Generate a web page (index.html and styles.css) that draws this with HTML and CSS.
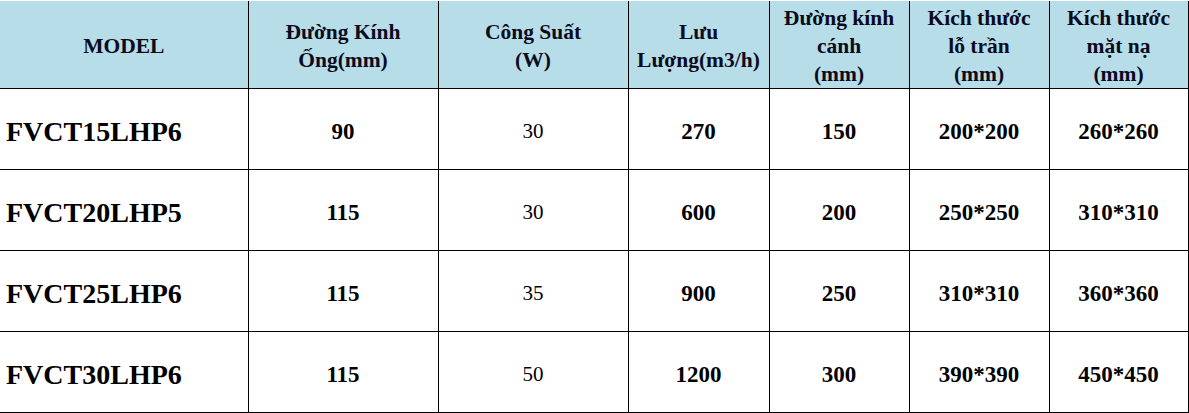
FILE: index.html
```html
<!DOCTYPE html>
<html lang="vi">
<head>
<meta charset="utf-8">
<title>Bảng thông số</title>
<link rel="stylesheet" href="styles.css">
</head>
<body>
<table class="spec">
  <colgroup>
    <col class="c1"><col class="c2"><col class="c3"><col class="c4"><col class="c5"><col class="c6"><col class="c7">
  </colgroup>
  <thead>
    <tr class="head">
      <th>MODEL</th>
      <th>Đường Kính<br>Ống(mm)</th>
      <th>Công Suất<br>(W)</th>
      <th>Lưu<br>Lượng(m3/h)</th>
      <th>Đường kính<br>cánh<br>(mm)</th>
      <th>Kích thước<br>lỗ trần<br>(mm)</th>
      <th>Kích thước<br>mặt nạ<br>(mm)</th>
    </tr>
  </thead>
  <tbody>
    <tr>
      <td class="model">FVCT15LHP6</td><td class="num">90</td><td class="reg">30</td><td class="num">270</td><td class="num">150</td><td class="num">200*200</td><td class="num">260*260</td>
    </tr>
    <tr>
      <td class="model">FVCT20LHP5</td><td class="num">115</td><td class="reg">30</td><td class="num">600</td><td class="num">200</td><td class="num">250*250</td><td class="num">310*310</td>
    </tr>
    <tr>
      <td class="model">FVCT25LHP6</td><td class="num">115</td><td class="reg">35</td><td class="num">900</td><td class="num">250</td><td class="num">310*310</td><td class="num">360*360</td>
    </tr>
    <tr>
      <td class="model">FVCT30LHP6</td><td class="num">115</td><td class="reg">50</td><td class="num">1200</td><td class="num">300</td><td class="num">390*390</td><td class="num">450*450</td>
    </tr>
  </tbody>
</table>
</body>
</html>
```
FILE: styles.css
```css
html, body {
  margin: 0;
  padding: 0;
  background: #ffffff;
}
body {
  padding-top: 1px;
  font-family: "Liberation Serif", Tinos, "DejaVu Serif", serif;
  color: #000;
}
.spec {
  border-collapse: collapse;
  table-layout: fixed;
  width: 1188px;
  font-family: "Liberation Serif", Tinos, "DejaVu Serif", serif;
}
.c1 { width: 248px; }
.c2 { width: 190px; }
.c3 { width: 190px; }
.c4 { width: 141px; }
.c5 { width: 140px; }
.c6 { width: 140px; }
.c7 { width: 139px; }
.spec th,
.spec td {
  padding: 0;
  border-right: 1px solid #000;
  border-bottom: 1px solid #000;
  text-align: center;
  vertical-align: middle;
  font-family: "Liberation Serif", Tinos, "DejaVu Serif", serif;
}
.head th {
  height: 87px;
  background: #b7dde8;
  color: #0b0b1c;
  font-size: 21.5px;
  font-weight: bold;
  line-height: 28px;
  padding-top: 3px;
  box-sizing: border-box;
}
.spec tbody td {
  height: 81px;
  padding-top: 5px;
  box-sizing: border-box;
}
.model {
  text-align: left !important;
  padding-left: 6px !important;
  font-size: 28px;
  font-weight: bold;
}
.num {
  font-size: 23px;
  font-weight: bold;
}
.reg {
  font-size: 21px;
  font-weight: normal;
}
```
